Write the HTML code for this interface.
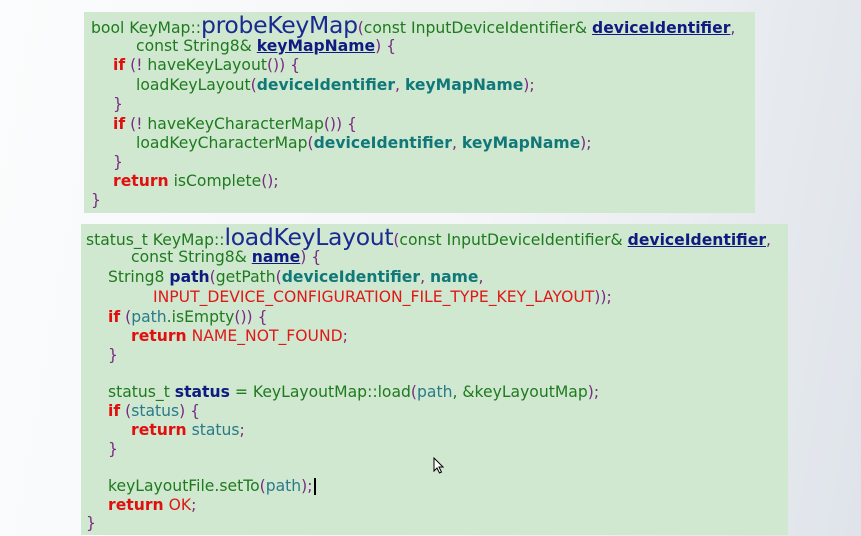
<!DOCTYPE html>
<html><head><meta charset="utf-8"><style>
html,body{margin:0;padding:0;}
body{width:861px;height:536px;overflow:hidden;position:relative;background:linear-gradient(100deg,#fbfcfd 0%,#f3f5f7 55%,#dfe4ea 100%);font-family:"DejaVu Sans","Liberation Sans",sans-serif;font-size:15.6px;}
.box{position:absolute;background:#cfe8cf;}
.l{position:absolute;white-space:nowrap;line-height:18px;color:#1f7a1f;letter-spacing:0}
.p{color:#7a2a82}
.k{color:#e01010;font-weight:bold}
.r{color:#e01818}
.b{color:#111a80;font-weight:bold;text-decoration:underline}
.bb{color:#111a80;font-weight:bold}
.t{color:#107878;font-weight:bold}
.tn{color:#2a7a8a}
.big{font-size:23.5px;color:#1a2a90;letter-spacing:-0.3px}
</style></head><body>
<div class="box" style="left:84px;top:12px;width:671px;height:201px"></div>
<div class="box" style="left:81px;top:224px;width:707px;height:311px"></div>

<div class="l" style="left:91px;top:16px">bool KeyMap::<span class="big">probeKeyMap</span><span class="p">(</span>const InputDeviceIdentifier&amp; <span class="b">deviceIdentifier</span><span class="p">,</span></div>
<div class="l" style="left:136px;top:37px">const String8&amp; <span class="b">keyMapName</span><span class="p">) {</span></div>
<div class="l" style="left:113px;top:56px"><span class="k">if</span> <span class="p">(!</span> haveKeyLayout<span class="p">()) {</span></div>
<div class="l" style="left:136px;top:76px">loadKeyLayout<span class="p">(</span><span class="t">deviceIdentifier</span><span class="p">,</span> <span class="t">keyMapName</span><span class="p">);</span></div>
<div class="l" style="left:113px;top:95px"><span class="p">}</span></div>
<div class="l" style="left:113px;top:115px"><span class="k">if</span> <span class="p">(!</span> haveKeyCharacterMap<span class="p">()) {</span></div>
<div class="l" style="left:136px;top:134px">loadKeyCharacterMap<span class="p">(</span><span class="t">deviceIdentifier</span><span class="p">,</span> <span class="t">keyMapName</span><span class="p">);</span></div>
<div class="l" style="left:113px;top:153px"><span class="p">}</span></div>
<div class="l" style="left:113px;top:172px"><span class="k">return</span> isComplete<span class="p">();</span></div>
<div class="l" style="left:91px;top:191px"><span class="p">}</span></div>

<div class="l" style="left:86px;top:228px">status_t KeyMap::<span class="big">loadKeyLayout</span><span class="p">(</span>const InputDeviceIdentifier&amp; <span class="b">deviceIdentifier</span><span class="p">,</span></div>
<div class="l" style="left:131px;top:248px">const String8&amp; <span class="b">name</span><span class="p">) {</span></div>
<div class="l" style="left:108px;top:268px">String8 <span class="bb">path</span><span class="p">(</span>getPath<span class="p">(</span><span class="t">deviceIdentifier</span><span class="p">,</span> <span class="t">name</span><span class="p">,</span></div>
<div class="l" style="left:153px;top:288px"><span class="r">INPUT_DEVICE_CONFIGURATION_FILE_TYPE_KEY_LAYOUT</span><span class="p">));</span></div>
<div class="l" style="left:108px;top:308px"><span class="k">if</span> <span class="p">(</span><span class="tn">path</span>.isEmpty<span class="p">()) {</span></div>
<div class="l" style="left:131px;top:327px"><span class="k">return</span> <span class="r">NAME_NOT_FOUND</span><span class="p">;</span></div>
<div class="l" style="left:108px;top:346px"><span class="p">}</span></div>
<div class="l" style="left:108px;top:383px">status_t <span class="bb">status</span> = KeyLayoutMap::load<span class="p">(</span><span class="tn">path</span>, &amp;keyLayoutMap<span class="p">);</span></div>
<div class="l" style="left:108px;top:402px"><span class="k">if</span> <span class="p">(</span><span class="tn">status</span><span class="p">) {</span></div>
<div class="l" style="left:131px;top:421px"><span class="k">return</span> <span class="tn">status</span><span class="p">;</span></div>
<div class="l" style="left:108px;top:440px"><span class="p">}</span></div>
<div class="l" style="left:108px;top:477px">keyLayoutFile.setTo<span class="p">(</span><span class="tn">path</span><span class="p">);</span><span style="display:inline-block;width:2px;height:17px;background:#000;vertical-align:middle;margin-left:1px"></span></div>
<div class="l" style="left:108px;top:496px"><span class="k">return</span> <span class="r">OK</span><span class="p">;</span></div>
<div class="l" style="left:86px;top:514px"><span class="p">}</span></div>

<svg style="position:absolute;left:433px;top:457px" width="12" height="18" viewBox="0 0 12 18"><path d="M1 1 L1 14 L4 11 L6.5 16 L8.5 15 L6 10 L10 10 Z" fill="#fff" stroke="#000" stroke-width="1"/></svg>
</body></html>
